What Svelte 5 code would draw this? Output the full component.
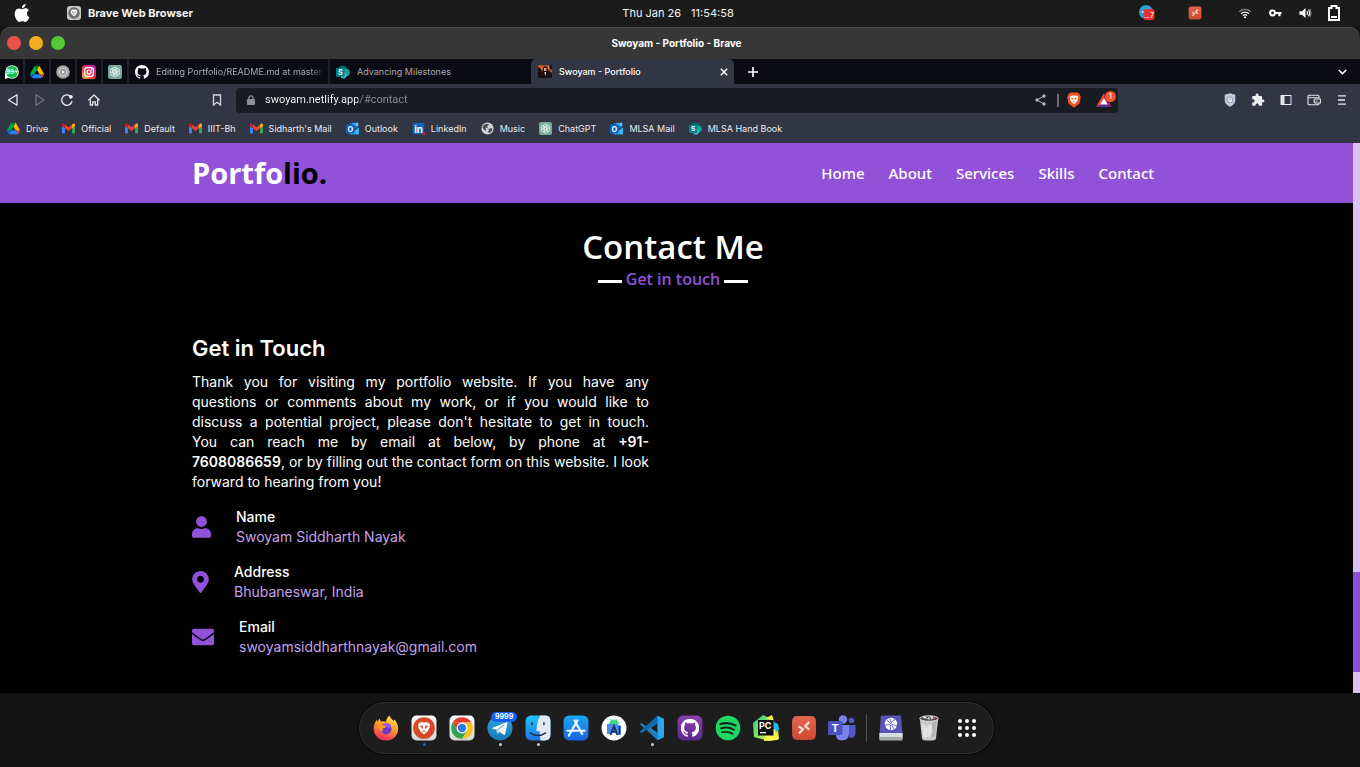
<script>
  const pinned = [
    { icon: 'whatsapp', label: 'WhatsApp' },
    { icon: 'drive', label: 'Drive' },
    { icon: 'ytmusic', label: 'Music' },
    { icon: 'instagram', label: 'Instagram' },
    { icon: 'chatgpt', label: 'ChatGPT' }
  ];
  const navButtons = [
    { icon: 'back', label: 'Back' },
    { icon: 'forward', label: 'Forward' },
    { icon: 'reload', label: 'Reload' },
    { icon: 'home', label: 'Home' }
  ];
  const tools = [
    { icon: 'shield', label: 'Shield' },
    { icon: 'puzzle', label: 'Extensions' },
    { icon: 'sidebar', label: 'Sidebar' },
    { icon: 'wallet', label: 'Wallet' },
    { icon: 'menu', label: 'Menu' }
  ];
  const bookmarks = [
    { icon: 'drive', label: 'Drive' },
    { icon: 'gmail', label: 'Official' },
    { icon: 'gmail', label: 'Default' },
    { icon: 'gmail', label: 'IIIT-Bh' },
    { icon: 'gmail', label: "Sidharth's Mail" },
    { icon: 'outlook', label: 'Outlook' },
    { icon: 'linkedin', label: 'LinkedIn' },
    { icon: 'globe', label: 'Music' },
    { icon: 'chatgpt', label: 'ChatGPT' },
    { icon: 'outlook', label: 'MLSA Mail' },
    { icon: 'sharepoint', label: 'MLSA Hand Book' }
  ];
  const sections = ['Home', 'About', 'Services', 'Skills', 'Contact'];
  const contacts = [
    { icon: 'user', width: 19, title: 'Name', value: 'Swoyam Siddharth Nayak' },
    { icon: 'marker', width: 17, title: 'Address', value: 'Bhubaneswar, India' },
    { icon: 'envelope', width: 22, title: 'Email', value: 'swoyamsiddharthnayak@gmail.com' }
  ];
  const apps = [
    { icon: 'firefox', label: 'Firefox' },
    { icon: 'braveapp', label: 'Brave', dot: 'blue' },
    { icon: 'chrome', label: 'Chrome' },
    { icon: 'telegram', label: 'Telegram', dot: 'grey', badge: '9999' },
    { icon: 'finder', label: 'Files', dot: 'grey' },
    { icon: 'appstore', label: 'App Store' },
    { icon: 'android', label: 'Android Studio' },
    { icon: 'vscode', label: 'Code', dot: 'grey' },
    { icon: 'githubapp', label: 'GitHub' },
    { icon: 'spotify', label: 'Spotify' },
    { icon: 'pycharm', label: 'PyCharm' },
    { icon: 'remote', label: 'Remote Desktop' },
    { icon: 'teams', label: 'Teams' }
  ];
  const places = [
    { icon: 'disk', label: 'Disk' },
    { icon: 'trash', label: 'Trash' },
    { icon: 'grid', label: 'Applications' }
  ];
</script>

{#snippet icon(name, w, h = w)}
  <svg class="ic" width={w} height={h} aria-hidden="true"><use href={'#' + name} /></svg>
{/snippet}

<svg class="defs" width="0" height="0" aria-hidden="true">
  <defs>
    <linearGradient id="g-ff" x1="0.7" y1="0" x2="0.3" y2="1"><stop offset="0" stop-color="#ffe84a" /><stop offset="0.45" stop-color="#ff9a26" /><stop offset="1" stop-color="#f5206a" /></linearGradient>
    <linearGradient id="g-ig" x1="0" y1="1" x2="1" y2="0"><stop offset="0" stop-color="#ffc43a" /><stop offset="0.5" stop-color="#f5284e" /><stop offset="1" stop-color="#9a28e0" /></linearGradient>
    <linearGradient id="g-tg" x1="0" y1="0" x2="0" y2="1"><stop offset="0" stop-color="#2fa5de" /><stop offset="1" stop-color="#1478b4" /></linearGradient>
    <linearGradient id="g-as" x1="0" y1="0" x2="0" y2="1"><stop offset="0" stop-color="#19a8f5" /><stop offset="1" stop-color="#1a62e0" /></linearGradient>
    <linearGradient id="g-fi" x1="0" y1="0" x2="0" y2="1"><stop offset="0" stop-color="#22c3f8" /><stop offset="1" stop-color="#1c74e8" /></linearGradient>
    <linearGradient id="g-gh" x1="0" y1="0" x2="0" y2="1"><stop offset="0" stop-color="#8c3cae" /><stop offset="1" stop-color="#5c2a88" /></linearGradient>
    <linearGradient id="g-rd" x1="0" y1="0" x2="0" y2="1"><stop offset="0" stop-color="#e2674e" /><stop offset="1" stop-color="#cc4a31" /></linearGradient>
    <linearGradient id="g-wh" x1="0" y1="0" x2="0" y2="1"><stop offset="0" stop-color="#ffffff" /><stop offset="1" stop-color="#d6d6d6" /></linearGradient>
    <linearGradient id="g-pc" x1="0" y1="0" x2="1" y2="1"><stop offset="0" stop-color="#24d68c" /><stop offset="1" stop-color="#f6f03c" /></linearGradient>
  </defs>
</svg>

<svg class="symbols" aria-hidden="true">
  <symbol id="apple" viewBox="0 0 24 24"><path fill="#fff" d="M12.152 6.896c-.948 0-2.415-1.078-3.96-1.04-2.04.027-3.91 1.183-4.961 3.014-2.117 3.675-.546 9.103 1.519 12.09 1.013 1.454 2.208 3.09 3.792 3.039 1.52-.065 2.09-.987 3.935-.987 1.831 0 2.35.987 3.96.948 1.637-.026 2.676-1.48 3.676-2.948 1.156-1.688 1.636-3.325 1.662-3.415-.039-.013-3.182-1.221-3.22-4.857-.026-3.04 2.48-4.494 2.597-4.559-1.429-2.09-3.623-2.324-4.39-2.376-2-.156-3.675 1.09-4.61 1.09zM15.53 3.83c.843-1.012 1.4-2.427 1.245-3.83-1.207.052-2.662.805-3.532 1.818-.78.896-1.454 2.338-1.273 3.714 1.338.104 2.715-.688 3.559-1.701" /></symbol>
  <symbol id="lion" viewBox="0 0 16 16"><path fill="#fff" d="M3.500 1.500 6 1l2 .6L10 1l2.500.5L15 4l-.8 2 .3 1-2.300 4.500L8 15l-4.200-3.500L1.500 7l.3-1L1 4z" /><path fill="currentColor" d="M3 5 6.800 4.800 6.600 6 7 9 5.500 7.600zM13 5 9.200 4.800 9.400 6 9 9l1.500-1.400zM5.500 11.300 8 10.300l2.500 1L9.500 12 8 11.300 6.500 12z" /></symbol>
  <symbol id="bravegrey" viewBox="0 0 14 14"><rect width="14" height="14" rx="3" fill="#c9c9c9" /><circle cx="7" cy="7" r="5.700" fill="#6a6a6a" /><svg x="3" y="3" width="8" height="8" color="#6a6a6a"><use href="#lion" /></svg></symbol>
  <symbol id="bird" viewBox="0 0 16 16"><circle cx="7" cy="7" r="7" fill="#2d9fd8" /><circle cx="4" cy="7" r="1" fill="#fff" /><rect x="4.500" y="4" width="11" height="11" rx="2.500" fill="#e8322c" /><text x="5" y="13" font-size="7" fill="#fff" font-family="Inter, sans-serif">...7</text></symbol>
  <symbol id="remote" viewBox="0 0 24 24"><rect x="1" y="1" width="22" height="22" rx="4.500" fill="url(#g-rd)" /><path fill="none" stroke="#fbe4de" stroke-width="2" d="m7 10.500 4 2.600-3.600 4M17 6.500l-3.900 3.600 3.700 3.400" /></symbol>
  <symbol id="wifi" viewBox="0 0 16 12"><g fill="none" stroke="#fff" stroke-width="1.400"><path d="M1.500 4.500a9.500 9.500 0 0 1 13 0" stroke="#888" /><path d="M3.500 6.800a6.500 6.500 0 0 1 9 0" /><path d="M5.600 9a3.600 3.600 0 0 1 4.800 0" /></g><circle cx="8" cy="10.800" r="1.200" fill="#fff" /></symbol>
  <symbol id="key" viewBox="0 0 14 8"><circle cx="3.800" cy="4" r="2.600" fill="none" stroke="#fff" stroke-width="2.200" /><path fill="#fff" d="M6 2.800h7.500v2.400h-1V7.500H10V5.200H6z" /></symbol>
  <symbol id="volume" viewBox="0 0 14 12"><path fill="#fff" d="M.5 4h2.800L7 .7v10.600L3.300 8H.5z" /><path fill="none" stroke="#fff" stroke-width="1.200" d="M8.500 4q1.600 2 0 4M10 2.500q3 3.500 0 7" /><path fill="none" stroke="#999" d="M11.700 1.500q3 4.500 0 9" /></symbol>
  <symbol id="battery" viewBox="0 0 12 16"><path fill="none" stroke="#fff" stroke-width="2" d="M1 3h2.500V1h5v2H11v12H1z" /><path fill="#fff" d="M3 11h6v2H3z" /></symbol>

  <symbol id="whatsapp" viewBox="0 0 16 16"><circle cx="8" cy="8" r="7.800" fill="#fff" /><path fill="#fff" d="M0 16V9l6 5z" /><circle cx="8" cy="8" r="6.800" fill="#0bc150" /><text x="8" y="10.600" text-anchor="middle" font-size="7" font-weight="700" fill="#fff" font-family="Inter, sans-serif">99+</text></symbol>
  <symbol id="drive" viewBox="0 0 87.3 78"><path fill="#0066da" d="m6.600 66.850 3.850 6.650c.8 1.400 1.950 2.500 3.300 3.300l13.750-23.800h-27.500c0 1.550.4 3.100 1.200 4.500z" /><path fill="#00ac47" d="m43.650 25-13.750-23.800c-1.350.8-2.500 1.900-3.300 3.300l-25.400 44a9.060 9.060 0 0 0 -1.200 4.500h27.500z" /><path fill="#ea4335" d="m73.550 76.800c1.350-.8 2.500-1.900 3.300-3.300l1.600-2.750 7.650-13.250c.8-1.400 1.200-2.950 1.200-4.500h-27.502l5.852 11.500z" /><path fill="#00832d" d="m43.650 25 13.750-23.800c-1.350-.8-2.900-1.200-4.500-1.200h-18.500c-1.600 0-3.150.45-4.500 1.200z" /><path fill="#2684fc" d="m59.800 53h-32.300l-13.750 23.800c1.350.8 2.900 1.200 4.500 1.200h50.800c1.600 0 3.150-.45 4.500-1.200z" /><path fill="#ffba00" d="m73.400 26.500-12.700-22c-.8-1.400-1.950-2.500-3.300-3.300l-13.750 23.800 16.150 28h27.450c0-1.550-.4-3.100-1.200-4.500z" /></symbol>
  <symbol id="ytmusic" viewBox="0 0 16 16"><circle cx="8" cy="8" r="7.800" fill="#a6a6a6" /><circle cx="8" cy="8" r="4.300" fill="#8a8a8a" stroke="#e6e6e6" /><path fill="#fff" d="m6.700 5.700 3.800 2.300-3.800 2.300z" /></symbol>
  <symbol id="instagram" viewBox="0 0 16 16"><rect width="16" height="16" rx="4" fill="url(#g-ig)" /><rect x="3" y="3" width="10" height="10" rx="3" fill="none" stroke="#fff" stroke-width="1.400" /><circle cx="8" cy="8" r="2.300" fill="none" stroke="#fff" stroke-width="1.400" /><circle cx="11" cy="5" r=".8" fill="#fff" /></symbol>
  <symbol id="chatgpt" viewBox="0 0 16 16"><rect width="16" height="16" rx="2.500" fill="#74a89b" /><g fill="none" stroke="#eef7f4" stroke-width=".9"><path id="petal" d="M5.300 8.800V4.900a2.600 2.600 0 0 1 4.900-1.200M8 6.500l3.300 1.900" /><use href="#petal" transform="rotate(60 8 8)" /><use href="#petal" transform="rotate(120 8 8)" /><use href="#petal" transform="rotate(180 8 8)" /><use href="#petal" transform="rotate(240 8 8)" /><use href="#petal" transform="rotate(300 8 8)" /></g></symbol>
  <symbol id="github" viewBox="0 0 16 16"><path fill="#fff" d="M8 0C3.580 0 0 3.580 0 8c0 3.540 2.290 6.530 5.470 7.590.4.070.55-.17.55-.38 0-.19-.01-.82-.01-1.490-2.010.37-2.530-.49-2.690-.94-.09-.23-.48-.94-.82-1.130-.28-.15-.68-.52-.01-.53.63-.01 1.080.58 1.230.82.72 1.210 1.870.87 2.330.66.070-.52.28-.87.51-1.070-1.780-.2-3.640-.89-3.640-3.950 0-.87.31-1.590.82-2.150-.08-.2-.36-1.020.08-2.120 0 0 .67-.21 2.200.82.64-.18 1.320-.27 2-.27.68 0 1.360.09 2 .27 1.530-1.040 2.200-.82 2.200-.82.44 1.100.16 1.920.08 2.120.51.56.82 1.270.82 2.150 0 3.070-1.870 3.750-3.650 3.950.29.25.54.73.54 1.480 0 1.070-.01 1.930-.01 2.200 0 .21.15.46.55.38A8.013 8.013 0 0016 8c0-4.420-3.580-8-8-8z" /></symbol>
  <symbol id="sharepoint" viewBox="0 0 16 16"><circle cx="7.500" cy="5.500" r="5" fill="#036c70" /><circle cx="11.500" cy="8.500" r="4.300" fill="#1a9ba1" /><circle cx="8.500" cy="12" r="3.500" fill="#37c6d0" /><rect x="0" y="3.500" width="10" height="10" rx="1" fill="#038387" /><text x="5" y="11.500" text-anchor="middle" font-size="8" font-weight="700" fill="#fff" font-family="Inter, sans-serif">S</text></symbol>
  <symbol id="photo" viewBox="0 0 14 13"><path fill="#b5532c" d="M0 0h14v13H0z" /><path fill="#1c1014" d="M0 2l3 2 1 3v6H0zM5 3l2-2 2 1 1 3 4 3v5H4V8zM11 0h3v5l-2-1z" /><path fill="#d7a27f" d="M6 3h2.500v3H6z" /><path fill="#fff" d="m6.500 7 .8 4 .8-4z" /><path fill="#f08a4c" d="M2 1h1l2 4H4zM10 1h1v3h-1z" /></symbol>
  <symbol id="close" viewBox="0 0 8 8"><path stroke="#fff" stroke-width="1.500" d="m.8.8 6.400 6.400M7.200.8.8 7.200" /></symbol>
  <symbol id="plus" viewBox="0 0 10 10"><path stroke="#fff" stroke-width="1.600" d="M5 0v10M0 5h10" /></symbol>
  <symbol id="chevron" viewBox="0 0 9 6"><path fill="none" stroke="#fff" stroke-width="1.600" d="m.8 1 3.700 3.600L8.200 1" /></symbol>

  <symbol id="back" viewBox="0 0 12 14"><path fill="none" stroke="#e6e6ea" stroke-width="1.300" stroke-linejoin="round" d="M10 1.700v10.600L1.500 7z" /></symbol>
  <symbol id="forward" viewBox="0 0 12 14"><path fill="none" stroke="#73757f" stroke-width="1.300" stroke-linejoin="round" d="M2 1.700v10.600L10 7z" /></symbol>
  <symbol id="reload" viewBox="0 0 14 14"><path fill="none" stroke="#e6e6ea" stroke-width="1.400" d="M12 8.200A5.200 5.200 0 1 1 9.800 2.800" /><circle cx="10.800" cy="3.800" r="1.900" fill="#f4f4f6" /></symbol>
  <symbol id="home" viewBox="0 0 14 14"><path fill="none" stroke="#e6e6ea" stroke-width="1.300" stroke-linejoin="round" d="M1.500 7.300 7 2l5.500 5.300M3.300 6.200V12h2.400V8.800h2.600V12h2.400V6.200" /></symbol>
  <symbol id="mark" viewBox="0 0 10 12"><path fill="none" stroke="#d6d7de" stroke-width="1.300" d="M1.500 1h7v10L5 8.300 1.500 11z" /></symbol>
  <symbol id="lock" viewBox="0 0 8 10"><rect y="4" width="8" height="6" rx="1" fill="#8e9096" /><path fill="none" stroke="#8e9096" stroke-width="1.300" d="M2 4.500V2.800a2 2 0 0 1 4 0v1.700" /></symbol>
  <symbol id="share" viewBox="0 0 11 12"><path fill="none" stroke="#b4b5ba" d="M9 2 2 6l7 4" /><g fill="#b4b5ba"><circle cx="9" cy="2" r="1.700" /><circle cx="2" cy="6" r="1.700" /><circle cx="9" cy="10" r="1.700" /></g></symbol>
  <symbol id="bravelogo" viewBox="0 0 14 16"><path fill="#f4511e" d="M3.500.5h7l1.700 1.300L13.800 5l-1.300 6.500L7 15.800l-5.500-4.300L.2 5l1.600-3.200z" /><svg x="2" y="2.500" width="10" height="10.500" color="#f4511e"><use href="#lion" /></svg></symbol>
  <symbol id="bat" viewBox="0 0 16 14"><path fill="#ff4724" d="M8 0 0 14l4-2.300L8 5z" /><path fill="#662d91" d="m0 14 4.200-2.500h7.600L16 14z" /><path fill="#9e1f63" d="M8 0v5l4 6.700L16 14z" /><path fill="#fff" d="m8 5 4 6.600H4z" /></symbol>
  <symbol id="shield" viewBox="0 0 12 14"><path fill="#c3cbdc" d="m6 .3 5.300 1.500v5.700Q11 11.500 6 13.800 1 11.500.7 7.500V1.800z" /><circle cx="6" cy="6.800" r="3" fill="#e8ecf5" stroke="#8e9bb8" /><path stroke="#7786a8" d="M4.800 7.300 7.200 5.500" /></symbol>
  <symbol id="puzzle" viewBox="0 0 24 24"><path fill="#eeeef1" d="M20.500 11H19V7c0-1.100-.9-2-2-2h-4V3.500C13 2.120 11.880 1 10.500 1S8 2.120 8 3.500V5H4c-1.100 0-1.990.9-1.990 2v3.800H3.500c1.490 0 2.700 1.210 2.700 2.700s-1.210 2.700-2.700 2.700H2V20c0 1.100.9 2 2 2h3.800v-1.500c0-1.490 1.210-2.700 2.700-2.700 1.490 0 2.700 1.210 2.700 2.700V22H17c1.100 0 2-.9 2-2v-4h1.500c1.380 0 2.500-1.120 2.500-2.500S21.880 11 20.500 11z" /></symbol>
  <symbol id="sidebar" viewBox="0 0 12 12"><rect x="1" y="1.500" width="10" height="9" fill="none" stroke="#e6e6ea" /><path fill="#e6e6ea" d="M1 1h3.500v10H1z" /></symbol>
  <symbol id="wallet" viewBox="0 0 14 12"><g fill="none" stroke="#e6e6ea" stroke-width="1.100"><path d="M12 4V2.500q0-1.200-1.200-1.200H2.200Q1 1.300 1 2.500v7q0 1.300 1.200 1.300h8.600q1.200 0 1.200-1.300V9M1 3.700h11.500" /><path d="M13.400 5H9a2 2 0 0 0 0 4h4.400z" /></g><path stroke="#e6e6ea" d="M8.700 7h1.600" /></symbol>
  <symbol id="menu" viewBox="0 0 10 10"><path stroke="#f0f0f2" stroke-width="1.300" d="M1 .8h8M1 5h7M1 9.200h8" /></symbol>

  <symbol id="gmail" viewBox="52 42 88 66"><path fill="#4285f4" d="M58 108h14V74L52 59v43c0 3.320 2.690 6 6 6" /><path fill="#34a853" d="M120 108h14c3.320 0 6-2.690 6-6V59l-20 15" /><path fill="#fbbc04" d="M120 48v26l20-15v-8c0-7.420-8.470-11.650-14.400-7.200" /><path fill="#ea4335" d="M72 74V48l24 18 24-18v26L96 92" /><path fill="#c5221f" d="M52 51v8l20 15V48l-5.600-4.200c-5.940-4.450-14.400-.22-14.400 7.200" /></symbol>
  <symbol id="outlook" viewBox="0 0 16 16"><path fill="#1066b5" d="M4 1h11v7H4z" /><path fill="#32a9e7" d="M8 1h4v4H8z" /><path fill="#52d0fb" d="M12 1h3v4h-3z" /><path fill="#1490df" d="m4 7 6 4 6-4v8H4z" /><path fill="#35b8f1" d="m4 15 12-8v8z" /><rect y="3.500" width="10.500" height="10.500" rx="1" fill="#0a63c2" /><text x="5.200" y="12" text-anchor="middle" font-size="9" font-weight="700" fill="#fff" font-family="Inter, sans-serif">O</text></symbol>
  <symbol id="linkedin" viewBox="0 0 16 16"><rect x="1" y="1" width="14" height="14" fill="#0a66c2" /><text x="8" y="13" text-anchor="middle" font-size="12" font-weight="700" fill="#fff" font-family="Inter, sans-serif">in</text><path fill="#d8222a" d="M13 13h3v3h-3z" /></symbol>
  <symbol id="globe" viewBox="0 0 16 16"><circle cx="8" cy="8" r="7.500" fill="#d2d3d9" /><path fill="#4a4c58" d="M2 5q3-3 6.500-3L10 3.500 7.500 5 8.500 7H5.500l1 2-1 2L2 7.500zM9 8.500l3-1 2.300 1Q13.500 12 10.500 13.500L8 12l2-1.500z" /></symbol>

  <symbol id="user" viewBox="0 0 448 512"><path fill="#9152d9" d="M224 256c70.700 0 128-57.300 128-128S294.700 0 224 0 96 57.300 96 128s57.300 128 128 128zm89.600 32h-16.700c-22.200 10.200-46.900 16-72.900 16s-50.600-5.800-72.900-16h-16.700C60.200 288 0 348.200 0 422.400V464c0 26.500 21.500 48 48 48h352c26.500 0 48-21.500 48-48v-41.600c0-74.200-60.200-134.400-134.400-134.400z" /></symbol>
  <symbol id="marker" viewBox="0 0 384 512"><path fill="#9152d9" d="M172.268 501.670C26.970 291.031 0 269.413 0 192 0 85.961 85.961 0 192 0s192 85.961 192 192c0 77.413-26.970 99.031-172.268 309.670-9.535 13.774-29.930 13.773-39.464 0zM192 272c44.183 0 80-35.817 80-80s-35.817-80-80-80-80 35.817-80 80 35.817 80 80 80z" /></symbol>
  <symbol id="envelope" viewBox="0 0 512 512"><path fill="#9152d9" d="M502.300 190.800c3.900-3.100 9.700-.2 9.700 4.700V400c0 26.500-21.500 48-48 48H48c-26.500 0-48-21.500-48-48V195.600c0-5 5.700-7.800 9.700-4.700 22.400 17.400 52.100 39.500 154.100 113.600 21.100 15.400 56.700 47.800 92.200 47.600 35.700.3 72-32.800 92.300-47.600 102-74.100 131.600-96.300 154-113.700zM256 320c23.200.4 56.600-29.200 73.400-41.400 132.700-96.300 142.800-104.700 173.400-128.700 5.800-4.500 9.200-11.500 9.200-18.900v-19c0-26.500-21.500-48-48-48H48c-26.500 0-48 21.500-48 48v19c0 7.400 3.400 14.300 9.200 18.900 30.600 23.900 40.700 32.400 173.400 128.700 16.800 12.200 50.200 41.800 73.400 41.400z" /></symbol>

  <symbol id="firefox" viewBox="0 0 26 26"><path fill="url(#g-ff)" d="M16.500.5c.8 2.500 2.500 3.500 4.200 5.500l.8-1.500c2.300 2.500 3.800 6 3.700 9.500C25 21 19.500 25.600 13 25.600S.8 20.500.6 14C.5 10 2 7 4 4.800L4.800 7l1.500-3.500L8 6.500q2.500-.7 5 .2C13.300 4.500 14.300 2 16.500.5z" /><circle cx="13" cy="13.800" r="5.600" fill="#7238c8" /><path fill="#9a52ff" d="M10 10q4-3.500 7.500.5l.5 3-3-1z" /><path fill="#ff9c20" d="M4 9.500q3-1.500 5 .5l4 1q-.5 2.500-3.500 2.500-.5 2 .5 3.200-5-1-6-7.200z" /></symbol>
  <symbol id="braveapp" viewBox="0 0 24 24"><rect x=".5" y=".5" width="23" height="23" rx="4.500" fill="url(#g-wh)" /><circle cx="12" cy="12" r="10" fill="#d84726" /><svg x="5.500" y="5.500" width="13" height="13.500" color="#d84726"><use href="#lion" /></svg></symbol>
  <symbol id="chrome" viewBox="0 0 24 24"><rect x=".5" y=".5" width="23" height="23" rx="4.500" fill="url(#g-wh)" /><path fill="#e23d2e" d="M3.340 7A10 10 0 0 1 20.660 7H12z" /><path fill="#e23d2e" d="M3.340 7 7.700 14.500 12 7z" /><path fill="#fbc116" d="M20.660 7A10 10 0 0 1 12 22l4.300-7.500L17 12l-5-5z" /><path fill="#2da44e" d="M3.340 7A10 10 0 0 0 12 22l4.300-7.500H7.700z" /><circle cx="12" cy="12" r="5" fill="#fff" /><circle cx="12" cy="12" r="3.900" fill="#2d7be8" /></symbol>
  <symbol id="telegram" viewBox="0 0 26 26"><circle cx="13" cy="13" r="12.500" fill="url(#g-tg)" /><path fill="#fff" d="M4.500 13.300 19.500 7.300q1.300-.4 1 1l-2.300 10.800q-.4 1.300-1.700.5L9 14.500z" /><path fill="#bfdcef" d="m9 14.500 1.300 4.500L12.600 17z" /><path stroke="#2590ca" stroke-width=".9" d="m10 14.800 7.500-5" /></symbol>
  <symbol id="finder" viewBox="0 0 24 24"><rect x=".5" y=".5" width="23" height="23" rx="5" fill="url(#g-fi)" /><path fill="#e3e7f2" d="M14 .5h4.500q5 0 5 5v13q0 5-5 5h-4q-1.300-4-1-8.500h-3Q11 6 14 .5z" /><path fill="none" stroke="#1b2c4e" stroke-width="1.300" stroke-linecap="round" d="M5 16.500q7 5 14 0M6.500 7v2M17.500 7v2" /></symbol>
  <symbol id="appstore" viewBox="0 0 24 24"><rect x=".5" y=".5" width="23" height="23" rx="5" fill="url(#g-as)" /><path fill="none" stroke="#f2f8ff" stroke-width="2" stroke-linecap="round" d="M13.300 5 6.500 17M10.700 5l7 12.500M4 14.500h10M17 14.500h3M5.800 18.200l-.5.9" /></symbol>
  <symbol id="android" viewBox="0 0 26 26"><circle cx="13" cy="13" r="12.500" fill="#fff" /><path fill="#3ddc84" d="M8 9a5 4.500 0 0 1 10 0z" /><path stroke="#3ddc84" d="m9.500 4 1 1.500M16.500 4l-1 1.500" /><path fill="#4a8af4" d="M6 9h10l4 2v9h-4l-3-3-3 2H6z" /><path fill="none" stroke="#16345e" stroke-width="1.800" d="m9.500 20 3.500-9 3.500 9M10.500 16q2.500 1.500 5 0" /><path stroke="#16345e" stroke-width="1.600" d="M18.500 11v8" /></symbol>
  <symbol id="vscode" viewBox="0 0 26 26"><path fill="#1f7fc4" d="M18.500.8 7.200 11.600 2.600 8 .8 9.200 5 13 .8 16.800 2.600 18l4.600-3.600L18.500 25.200V18L12 13l6.500-5z" /><path fill="#0f69ae" d="M.8 16.800 18.500.8V8L2.600 18z" /><path fill="#2ea4ee" d="M18.500.8 25 3.700v18.600l-6.500 2.900z" /></symbol>
  <symbol id="githubapp" viewBox="0 0 24 24"><rect x=".5" y=".5" width="23" height="23" rx="5" fill="url(#g-gh)" /><svg x="3.500" y="3.500" width="17" height="17"><use href="#github" /></svg></symbol>
  <symbol id="spotify" viewBox="0 0 26 26"><circle cx="13" cy="13" r="12.300" fill="#1ed760" /><g fill="none" stroke="#14241a" stroke-linecap="round"><path stroke-width="2.300" d="M5.500 9q8-2.300 15 1.500" /><path stroke-width="2" d="M6.300 13.300q7-2 12.700 1.500" /><path stroke-width="1.700" d="M7 17.300q6-1.500 10.700 1.400" /></g></symbol>
  <symbol id="pycharm" viewBox="0 0 26 26"><path fill="url(#g-pc)" d="M0 8 10 0l9 4 6 9 1 11-10 2L1 22z" /><path fill="#1fb8f5" d="m17 5 8 4 1 5-4 5z" /><path fill="#fcf04a" d="m13 3 6-3 2 6zM22 14l3 11-14 1 1-5z" /><path fill="#111" d="M5 5h15.500v15.500H5z" /><text x="6" y="13.500" font-size="9" font-weight="700" fill="#fff" font-family="Inter, sans-serif">PC</text><path fill="#fff" d="M7 17h6v1.300H7z" /></symbol>
  <symbol id="teams" viewBox="0 0 28 26"><circle cx="23.500" cy="5.500" r="2.800" fill="#5059c9" /><path fill="#5059c9" d="M19 10h8.500v8q0 5-6 5z" /><circle cx="15" cy="4.500" r="4.200" fill="#7b83eb" /><path fill="#7b83eb" d="M8 10h13v9q-.5 6.500-7 6.500T8 19z" /><rect x="0" y="6" width="14.500" height="14" rx="1.300" fill="#4b53bc" /><text x="7.200" y="17" text-anchor="middle" font-size="11" font-weight="700" fill="#fff" font-family="Inter, sans-serif">T</text></symbol>
  <symbol id="disk" viewBox="0 0 24 26"><path fill="#5a54b8" d="M2 .5h20l1.500 18H.5z" /><path fill="#d9dcdc" d="M.3 18h23.400v5H.3z" /><path fill="#a4aaa8" d="M.3 22h23.400v2.500q0 1-1 1H1.300q-1 0-1-1z" /><circle cx="12" cy="9" r="6.200" fill="#f4f4fb" /><path fill="none" stroke="#5a54b8" stroke-width=".8" d="M6 10q5 .5 6-2t5-4M12 9l6 2M11 3.500l1 3.500M8 5l3 3M12.500 10l2.500 4M11.500 10v5" /></symbol>
  <symbol id="trash" viewBox="0 0 22 28"><path fill="#c9c9c9" d="M1 3h20l-2.500 22.500q-.3 2-7.500 2t-7.500-2z" /><path fill="#e0e0e0" d="m3 8 5 5 5-4 3 6-4 8-6 2-1.500-3z" /><path fill="#b3b3b3" d="m14 9 5-3-1.500 16-4 3 1-8z" /><ellipse cx="11" cy="3.800" rx="10" ry="3" fill="#55504e" stroke="#e4e4e4" /><path fill="#f1f1f1" d="m4 3 3-2 2 3zM12 1l4 1-2 3zM9 4l2-2 1 3z" /><path fill="#c4554a" d="m16 2 2 1-1 2z" /><path fill="#3f9a90" d="M10 1h2v2z" /></symbol>
  <symbol id="grid" viewBox="0 0 18 18"><g fill="#fff"><circle cx="2" cy="2" r="2" /><circle cx="9" cy="2" r="2" /><circle cx="16" cy="2" r="2" /><circle cx="2" cy="9" r="2" /><circle cx="9" cy="9" r="2" /><circle cx="16" cy="9" r="2" /><circle cx="2" cy="16" r="2" /><circle cx="9" cy="16" r="2" /><circle cx="16" cy="16" r="2" /></g></symbol>
</svg>

<div class="desktop">
  <div class="panel">
    <div class="side">
      {@render icon('apple', 18, 18)}
      <span class="app">{@render icon('bravegrey', 14)} Brave Web Browser</span>
    </div>
    <time class="clock"><span>Thu Jan 26</span><span>11:54:58</span></time>
    <div class="side tray">
      <span class="cell bird">{@render icon('bird', 16)}</span>
      <span class="cell rdp">{@render icon('remote', 14)}</span>
      <span class="cell">{@render icon('wifi', 14, 12)}</span>
      <span class="cell">{@render icon('key', 13, 8)}</span>
      <span class="cell">{@render icon('volume', 13, 12)}</span>
      <span class="cell">{@render icon('battery', 12, 16)}</span>
    </div>
  </div>

  <div class="titlebar">
    <div class="lights">
      <button class="red" aria-label="Close window"></button>
      <button class="amber" aria-label="Minimise window"></button>
      <button class="green" aria-label="Maximise window"></button>
    </div>
    <span class="title">Swoyam - Portfolio - Brave</span>
  </div>

  <div class="tabs">
    {#each pinned as tab}
      <button class="pin" aria-label={tab.label}>{@render icon(tab.icon, 14)}</button>
    {/each}
    <button class="tab ruled">{@render icon('github', 14)}<span class="fade">Editing Portfolio/README.md at master ·</span></button>
    <button class="tab">{@render icon('sharepoint', 14)}<span>Advancing Milestones</span></button>
    <button class="tab active">{@render icon('photo', 14, 13)}<span>Swoyam - Portfolio</span>{@render icon('close', 8)}</button>
    <button class="new" aria-label="New tab">{@render icon('plus', 10)}</button>
    <button class="list" aria-label="Search tabs">{@render icon('chevron', 9, 6)}</button>
  </div>

  <div class="toolbar">
    <div class="history">
      {#each navButtons as b}
        <button class="tool" aria-label={b.label}>{@render icon(b.icon, b.icon === 'back' || b.icon === 'forward' ? 12 : 14, 14)}</button>
      {/each}
    </div>
    <button class="tool mark" aria-label="Bookmark this page">{@render icon('mark', 10, 12)}</button>
    <div class="address">
      {@render icon('lock', 8, 10)}
      <input type="text" aria-label="Address" value="swoyam.netlify.app/#contact" />
      <button aria-label="Share">{@render icon('share', 11, 12)}</button>
      <span class="rule"></span>
      <button aria-label="Brave Shields">{@render icon('bravelogo', 14, 16)}</button>
      <button class="rewards" aria-label="Rewards">{@render icon('bat', 16, 14)}<span class="count">1</span></button>
    </div>
    <div class="tools">
      {#each tools as b}
        <button class="tool" aria-label={b.label}>{@render icon(b.icon, b.icon === 'menu' ? 10 : b.icon === 'sidebar' || b.icon === 'shield' ? 12 : 14, b.icon === 'menu' ? 10 : b.icon === 'sidebar' ? 12 : 14)}</button>
      {/each}
    </div>
  </div>

  <nav class="bookmarks" aria-label="Bookmarks">
    {#each bookmarks as b}
      <a href="#contact">{@render icon(b.icon, 13)}{b.label}</a>
    {/each}
  </nav>

  <div class="view">
    <main class="page">
      <header>
        <div class="wrap bar">
          <a class="logo" href="#home">Portfo<span>lio.</span></a>
          <nav class="menu" aria-label="Sections">
            {#each sections as s}
              <a href={'#' + s.toLowerCase()}>{s}</a>
            {/each}
          </nav>
        </div>
      </header>
      <section>
        <div class="wrap">
          <h1>Contact Me</h1>
          <p class="sub">Get in touch</p>
          <div class="columns">
            <div>
              <h2>Get in Touch</h2>
              <p class="intro">
                <span>Thank you for visiting my portfolio website. If you have any</span>
                <span>questions or comments about my work, or if you would like to</span>
                <span>discuss a potential project, please don't hesitate to get in touch.</span>
                <span>You can reach me by email at below, by phone at <b>+91-</b></span>
                <span><b>7608086659</b>, or by filling out the contact form on this website. I look</span>
                <span>forward to hearing from you!</span>
              </p>
              {#each contacts as c}
                <div class="row">
                  {@render icon(c.icon, c.width, 22)}
                  <div>
                    <div class="head">{c.title}</div>
                    <div class="value">{c.value}</div>
                  </div>
                </div>
              {/each}
            </div>
          </div>
        </div>
      </section>
    </main>
    <div class="scroll"><div class="thumb"></div></div>
  </div>

  <div class="shelf">
    <div class="dock">
      {#each apps as a}
        <button aria-label={a.label}>
          {@render icon(a.icon, a.icon === 'teams' ? 28 : 26)}
          {#if a.badge}<span class="badge">{a.badge}</span>{/if}
          {#if a.dot}<span class="dot {a.dot}"></span>{/if}
        </button>
      {/each}
      <span class="divider"></span>
      {#each places as a}
        <button aria-label={a.label}>{@render icon(a.icon, a.icon === 'grid' ? 18 : a.icon === 'trash' ? 22 : 24, a.icon === 'grid' ? 18 : 26)}</button>
      {/each}
    </div>
  </div>
</div>

<style>
  :global(body) { margin: 0; background: #131313; }
  * { box-sizing: border-box; }
  .defs { position: absolute; }
  .symbols { display: none; }
  .ic { display: block; flex: none; }
  button { display: flex; align-items: center; justify-content: center; padding: 0; border: 0; background: none; color: inherit; font: inherit; }
  a { color: inherit; text-decoration: none; }
  .desktop { display: flex; flex-direction: column; min-height: 100vh; font-family: Inter, "Liberation Sans", sans-serif; font-size: 9px; color: #ececf0; }

  .panel { display: flex; align-items: center; height: 27px; padding: 0 13px 1px; background: #1b1b1b; color: #f4f4f4; font-size: 11px; }
  .side { display: flex; flex: 1; align-items: center; }
  .app { display: flex; align-items: center; gap: 7px; margin-left: 36px; font-weight: 700; }
  .clock { display: flex; gap: 10px; margin-right: 4px; }
  .tray { justify-content: flex-end; }
  .cell { display: flex; justify-content: center; width: 30px; }
  .cell:last-child { width: 27px; }
  .bird { width: 48px; }
  .rdp { width: 48px; margin-right: 11px; }

  .titlebar { display: flex; align-items: center; height: 32px; padding: 0 14px 2px 7px; border-top: 1px solid #4b4b4b; border-radius: 10px 10px 0 0; background: #373737; color: #fff; font-size: 10px; font-weight: 700; }
  .lights { display: flex; flex: 1; gap: 8px; }
  .lights button { width: 14px; height: 14px; border-radius: 50%; }
  .red { background: #ea524a; }
  .amber { background: #f0ad1d; }
  .green { background: #57c838; }
  .titlebar::after { content: ""; flex: 1; }

  .tabs { display: flex; height: 25px; background: #0b0b14; color: #a8a9b0; }
  .pin { width: 26px; border-right: 2px solid #1f2026; }
  .pin:first-child { width: 25px; }
  .tab { justify-content: flex-start; gap: 7px; width: 201px; padding: 0 4px 0 6px; white-space: nowrap; }
  .tab span { flex: 1; overflow: hidden; text-align: left; }
  .ruled { border-right: 2px solid #1f2026; }
  .fade { mask-image: linear-gradient(to right, #000 92%, transparent); }
  .active { width: 203px; padding: 0 6px 0 7px; border-radius: 5px 5px 0 0; background: #323543; color: #fff; font-weight: 500; }
  .new { width: 37px; }
  .list { width: 35px; margin-left: auto; }

  .toolbar { display: flex; align-items: center; height: 32px; background: #323543; }
  .history { display: flex; gap: 1px; }
  .tool { width: 26px; height: 26px; }
  .mark { margin: 0 6px 0 97px; }
  .address { display: flex; flex: 1; align-items: center; height: 25px; padding: 0 6px 0 11px; border-radius: 4px; background: #191b23; }
  .address input { flex: 1; min-width: 0; margin: 0 10px; padding: 0; border: 0; outline: 0; background: linear-gradient(to right, #fff 93px, #8c8e95 93px); background-clip: text; color: transparent; font: 11px/20px Roboto, sans-serif; }
  .rule { width: 2px; height: 13px; margin: 0 8px 0 11px; background: #6c6d75; }
  .rewards { position: relative; margin-left: 15px; }
  .count { position: absolute; top: -2px; right: -4px; width: 11px; height: 11px; border-radius: 50%; background: #fb542b; color: #fff; font-size: 8px; line-height: 11px; }
  .tools { display: flex; padding: 0 4px 0 98px; }
  .tools .tool { width: 28px; }

  .bookmarks { display: flex; align-items: center; gap: 14px; height: 27px; padding: 0 7px 3px; background: #323543; }
  .bookmarks a { display: flex; align-items: center; gap: 6px; white-space: nowrap; }

  .view { display: flex; flex: 1; background: #000; }
  .page { flex: 1; color: #fff; font-family: "Open Sans", "Noto Sans", sans-serif; }
  .scroll { display: flex; flex-direction: column; justify-content: flex-end; width: 7px; padding-bottom: 21px; background: #d9c2f0; }
  .thumb { height: 100px; background: #8c4dd6; }
  header { padding-right: 7px; background: #9152d9; }
  section { padding: 22px 7px 21px 0; }
  .wrap { max-width: 962px; margin: 0 auto; }
  .bar { display: flex; align-items: center; justify-content: space-between; height: 60px; }
  .logo { font-size: 29px; font-weight: 700; line-height: 40px; }
  .logo span { color: #000; }
  .menu { display: flex; gap: 24px; font-family: "Noto Sans", sans-serif; font-size: 15px; font-weight: 500; }
  h1 { margin: 0; font-size: 33px; font-weight: 600; line-height: 44px; text-align: center; }
  .sub { display: flex; align-items: center; justify-content: center; gap: 4px; margin: 0; color: #9152d9; font-size: 16px; font-weight: 600; line-height: 20px; }
  .sub::before, .sub::after { content: ""; width: 24px; height: 3px; margin-top: 4px; background: #fff; }
  .columns { display: grid; grid-template-columns: 1fr 1fr; gap: 48px; padding-top: 45px; font-family: Inter, sans-serif; font-size: 14px; line-height: 20px; }
  h2 { margin: 0 0 9px; font-size: 22px; font-weight: 600; line-height: 29px; }
  .intro { margin: 0 0 15px; white-space: nowrap; }
  .intro span { display: block; text-align: justify; text-align-last: justify; }
  .intro span:last-child { text-align-last: left; }
  .intro b { font-weight: 600; }
  .row { display: flex; align-items: center; gap: 25px; margin-bottom: 15px; }
  .head { font-weight: 500; }
  .value { color: #c3a2ec; }

  .shelf { display: flex; justify-content: center; padding: 8px 7px 13px 0; border-top: 1px solid #0b0b0b; background: #131313; }
  .dock { display: flex; align-items: center; height: 52px; padding: 0 7px; border: 1px solid #2e2e2e; border-radius: 26px; background: #1d1d1d; box-shadow: 0 0 0 1px #060606; }
  .dock button { position: relative; width: 38px; height: 50px; }
  .divider { width: 1px; height: 28px; margin: 0 5px; background: #555; }
  .badge { position: absolute; top: 9px; left: 10px; padding: 0 4px; border-radius: 5px; background: #1261f0; color: #fff; font-size: 7px; font-weight: 700; line-height: 10px; }
  .dot { position: absolute; bottom: 7px; width: 3px; height: 3px; border-radius: 50%; }
  .blue { background: #1261f0; }
  .grey { background: #ccc; }
</style>
